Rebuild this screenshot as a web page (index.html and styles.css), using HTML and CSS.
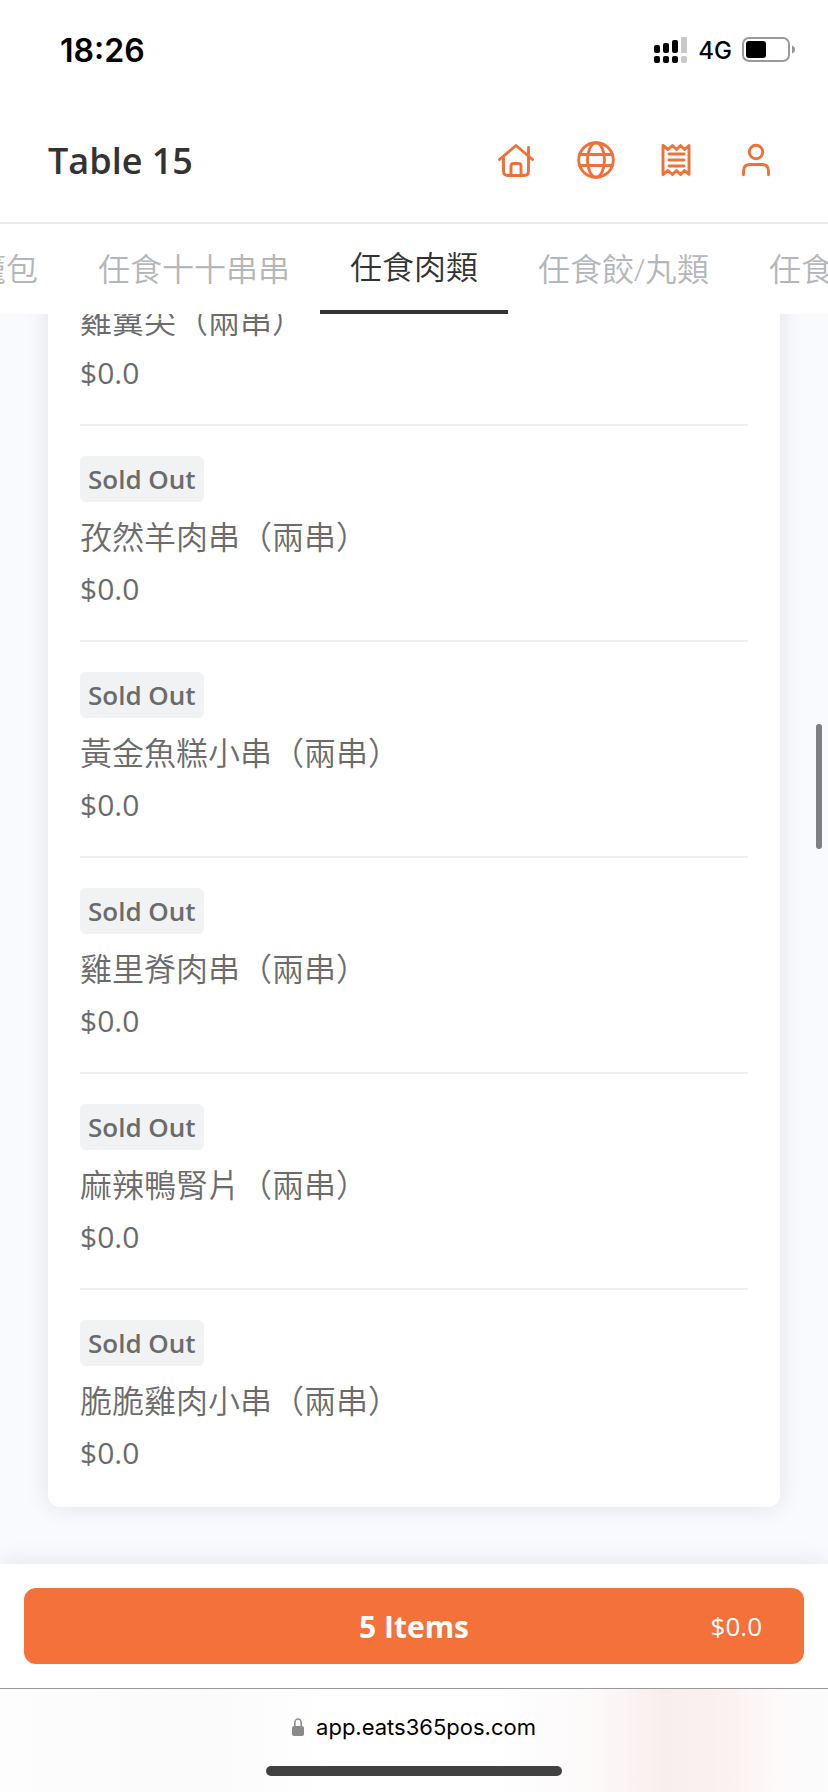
FILE: index.html
```html
<!DOCTYPE html>
<html lang="zh-Hant">
<head>
<meta charset="utf-8">
<meta name="viewport" content="width=device-width, initial-scale=1">
<title>Table 15</title>
<link rel="stylesheet" href="styles.css">
</head>
<body>
<div class="status">
  <span class="status-time">18:26</span>
  <div class="status-right">
    <svg class="signal" viewBox="0 0 34 26" aria-hidden="true">
      <rect x="0" y="8" width="6" height="8" rx="2"/><rect x="9" y="6" width="6" height="10" rx="2"/><rect x="18" y="3" width="6" height="13" rx="2"/>
      <rect class="dim" x="27" y="0" width="6" height="16" rx="1"/>
      <rect x="0" y="19" width="6" height="7" rx="2"/><rect x="9" y="19" width="6" height="7" rx="2"/><rect x="18" y="19" width="6" height="7" rx="2"/>
      <rect class="dim" x="27" y="19" width="6" height="7" rx="2"/>
    </svg>
    <span class="network">4G</span>
    <svg class="battery" viewBox="0 0 54 26" aria-hidden="true">
      <rect x="1" y="1" width="46" height="23" rx="6" fill="none" stroke="#999" stroke-width="2"/>
      <rect x="4" y="4" width="20" height="17" rx="3"/>
      <path d="M50 8.500q3 1 3 4t-3 4z" fill="#999"/>
    </svg>
  </div>
</div>
<header class="header">
  <h1 class="title">Table 15</h1>
  <nav class="actions">
    <button class="icon-btn" aria-label="Home"><svg viewBox="0 0 40 40"><path d="M3.500 19.500 20 5.500l16.500 14M32.500 16V7.500M7.500 17v14q0 4.500 4.500 4.500h16q4.500 0 4.500-4.500V17M15 35V26q0-2.500 2.500-2.500h5q2.500 0 2.500 2.500v9"/></svg></button>
    <button class="icon-btn" aria-label="Language"><svg viewBox="0 0 40 40"><circle cx="20" cy="20" r="17.300"/><ellipse cx="20" cy="20" rx="8.500" ry="17.300"/><path d="M4 14.500h32M4 25.500h32"/></svg></button>
    <button class="icon-btn" aria-label="Orders"><svg viewBox="0 0 40 40"><path d="M7 34.500v-29l5 4 4.500-4 4 4 4-4 4 4 4.500-4v29l-4.500-4-4 4-4-4-4 4-4.500-4zM13 14h15M13 20h15M13 26h15"/></svg></button>
    <button class="icon-btn" aria-label="Account"><svg viewBox="0 0 40 40"><circle cx="20" cy="12" r="6.700"/><path d="M7.500 34.700V31q0-6.500 6.500-6.500h12q6.500 0 6.500 6.500v3.700"/></svg></button>
  </nav>
</header>
<nav class="tabs">
  <button class="tab">小籠包</button>
  <button class="tab">任食十十串串</button>
  <button class="tab tab-active" aria-current="true">任食肉類</button>
  <button class="tab">任食餃/丸類</button>
  <button class="tab">任食</button>
</nav>
<main class="main">
  <ul class="card">
    <li class="item"><span class="name">雞翼尖（兩串）</span><span class="price">$0.0</span></li>
    <li class="item"><span class="badge">Sold Out</span><span class="name">孜然羊肉串（兩串）</span><span class="price">$0.0</span></li>
    <li class="item"><span class="badge">Sold Out</span><span class="name">黃金魚糕小串（兩串）</span><span class="price">$0.0</span></li>
    <li class="item"><span class="badge">Sold Out</span><span class="name">雞里脊肉串（兩串）</span><span class="price">$0.0</span></li>
    <li class="item"><span class="badge">Sold Out</span><span class="name">麻辣鴨腎片（兩串）</span><span class="price">$0.0</span></li>
    <li class="item"><span class="badge">Sold Out</span><span class="name">脆脆雞肉小串（兩串）</span><span class="price">$0.0</span></li>
  </ul>
</main>
<footer class="checkout">
  <button class="cart"><span></span><span class="cart-count">5 Items</span><span class="cart-total">$0.0</span></button>
</footer>
<div class="browser">
  <div class="address">
    <svg class="lock" viewBox="0 0 12 18" aria-hidden="true"><path d="M2.800 9V5a3.200 4 0 0 1 6.400 0v4" fill="none" stroke="#8a8a8c" stroke-width="1.600"/><rect y="8" width="12" height="10" rx="2" fill="#8a8a8c"/></svg>
    <a class="host" href="#">app.eats365pos.com</a>
  </div>
  <div class="home-bar"></div>
</div>
<div class="scrollbar"></div>
</body>
</html>
```
FILE: styles.css
```css
* { box-sizing: border-box; }

body {
  margin: 0;
  height: 100vh;
  display: flex;
  flex-direction: column;
  position: relative;
  overflow: hidden;
  background: #fff;
  color: #333;
  font-family: "Open Sans", "Noto Sans CJK TC", sans-serif;
}

button {
  margin: 0;
  padding: 0;
  border: 0;
  background: none;
  font: inherit;
  color: inherit;
}

.status {
  flex: none;
  height: 100px;
  padding: 0 32px 0 60px;
  display: flex;
  align-items: center;
  justify-content: space-between;
  color: #000;
  font-family: Inter, sans-serif;
}
.status-time { font-size: 32px; font-weight: 600; }
.status-right { display: flex; align-items: center; gap: 10px; }
.signal { width: 34px; height: 26px; }
.signal .dim { fill: #c8c8c8; }
.network { font-size: 24px; font-weight: 500; }
.battery { width: 54px; height: 26px; }

.header {
  flex: none;
  height: 124px;
  padding: 0 52px 2px 48px;
  display: flex;
  align-items: center;
  justify-content: space-between;
  border-bottom: 2px solid #e8e8e8;
}
.title { margin: 0; font-size: 36px; font-weight: 600; }
.actions { display: flex; gap: 40px; }
.icon-btn { width: 40px; height: 40px; }
.icon-btn svg {
  display: block;
  width: 100%;
  height: 100%;
  fill: none;
  stroke: #f0703a;
  stroke-width: 2.900;
  stroke-linecap: round;
  stroke-linejoin: round;
}

.tabs {
  flex: none;
  height: 90px;
  margin-left: -88px;
  display: flex;
  overflow: hidden;
}
.tab {
  flex: none;
  padding: 0 30px 4px;
  font-size: 32px;
  font-weight: 350;
  color: #b4b6b9;
  white-space: nowrap;
}
.tab-active { color: #333; border-bottom: 4px solid #333436; }

.main {
  flex: 1;
  min-height: 0;
  padding: 0 48px 57px;
  display: flex;
  flex-direction: column;
  justify-content: flex-end;
  overflow: hidden;
  background: #f9fafd;
}
.card {
  margin: 0;
  padding: 0 32px;
  list-style: none;
  background: #fff;
  border-radius: 12px;
  box-shadow: 0 0 24px rgba(0, 0, 0, 0.1);
}
.item {
  padding: 30px 0 27px;
  display: flex;
  flex-direction: column;
  align-items: flex-start;
  gap: 4px;
  border-bottom: 2px solid #efefef;
  color: #6b6b6b;
}
.item:last-child { padding-bottom: 30px; border-bottom: 0; }
.badge {
  margin-bottom: 7px;
  padding: 0 8px;
  border-radius: 6px;
  background: #f1f2f4;
  font-size: 26px;
  font-weight: 600;
  line-height: 46px;
}
.name { font-size: 32px; font-weight: 350; line-height: 48px; }
.price { font-size: 30px; line-height: 48px; }

.checkout {
  flex: none;
  position: relative;
  padding: 24px;
  background: #fff;
  box-shadow: 0 0 24px rgba(0, 0, 0, 0.1);
}
.cart {
  width: 100%;
  height: 76px;
  padding: 0 42px;
  display: grid;
  grid-template-columns: 1fr auto 1fr;
  align-items: center;
  border-radius: 12px;
  background: #f4713a;
  color: #fff;
}
.cart-count { font-size: 30px; font-weight: 700; }
.cart-total { font-size: 26px; text-align: right; }

.browser {
  flex: none;
  position: relative;
  height: 104px;
  padding: 20px 0 16px;
  display: flex;
  flex-direction: column;
  align-items: center;
  justify-content: space-between;
  border-top: 1px solid #98989a;
  background: linear-gradient(90deg, #fdfdfd, #fbfbfb 25%, #fff 40%, #fff 60%, #fcf9f9 72%, #f9eeee 80%, #faf0ef 86%, #fdfafa 94%, #fcfcfc);
}
.address { display: flex; align-items: center; gap: 12px; }
.lock { width: 12px; height: 18px; }
.host {
  color: #000;
  text-decoration: none;
  font-family: Inter, sans-serif;
  font-size: 22px;
  line-height: 36px;
}
.home-bar { width: 296px; height: 10px; border-radius: 5px; background: #414141; }

.scrollbar {
  position: absolute;
  top: 724px;
  right: 6px;
  width: 6px;
  height: 125px;
  border-radius: 3px;
  background: #7d7f80;
}
```
